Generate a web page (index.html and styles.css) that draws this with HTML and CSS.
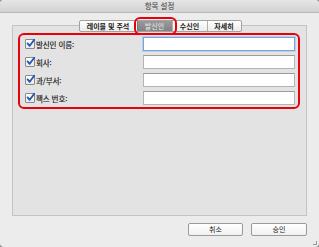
FILE: index.html
```html
<!DOCTYPE html>
<html lang="ko">
<head>
<meta charset="utf-8">
<link rel="stylesheet" href="styles.css">
</head>
<body>
<div class="window">
  <div class="titlebar">항목 설정</div>
  <div class="main">
    <div class="tabs">
      <div class="tab">레이블 및 주석</div>
      <div class="tab selected">발신인</div>
      <div class="tab">수신인</div>
      <div class="tab">자세히</div>
    </div>
    <div class="panel">
      <div class="group">
        <div class="row">
          <label class="check"><span class="box"><svg viewBox="0 0 9 9" width="9" height="9"><path d="M1.6 4.4 L3.7 6.8 L8.4 0.6" fill="none" stroke="#2457b3" stroke-width="1.8" stroke-linecap="round" stroke-linejoin="round"/></svg></span>발신인 이름:</label>
          <div class="field focus"></div>
        </div>
        <div class="row">
          <label class="check"><span class="box"><svg viewBox="0 0 9 9" width="9" height="9"><path d="M1.6 4.4 L3.7 6.8 L8.4 0.6" fill="none" stroke="#2457b3" stroke-width="1.8" stroke-linecap="round" stroke-linejoin="round"/></svg></span>회사:</label>
          <div class="field"></div>
        </div>
        <div class="row">
          <label class="check"><span class="box"><svg viewBox="0 0 9 9" width="9" height="9"><path d="M1.6 4.4 L3.7 6.8 L8.4 0.6" fill="none" stroke="#2457b3" stroke-width="1.8" stroke-linecap="round" stroke-linejoin="round"/></svg></span>과/부서:</label>
          <div class="field"></div>
        </div>
        <div class="row">
          <label class="check"><span class="box"><svg viewBox="0 0 9 9" width="9" height="9"><path d="M1.6 4.4 L3.7 6.8 L8.4 0.6" fill="none" stroke="#2457b3" stroke-width="1.8" stroke-linecap="round" stroke-linejoin="round"/></svg></span>팩스 번호:</label>
          <div class="field"></div>
        </div>
      </div>
    </div>
    <div class="buttons">
      <div class="btn">취소</div>
      <div class="btn">승인</div>
    </div>
  </div>
  <div class="grip"></div>
</div>
</body>
</html>
```
FILE: styles.css
```css
html, body {
  margin: 0;
  padding: 0;
  background: #8e8e8e;
}
.window {
  position: relative;
  width: 319px;
  height: 247px;
  box-sizing: border-box;
  background: #ececec;
  border-radius: 4px;
  overflow: hidden;
  font-family: "Noto Sans CJK KR", "Noto Sans", sans-serif;
  color: #111;
  display: flex;
  flex-direction: column;
}
.titlebar {
  height: 12px;
  line-height: 12px;
  text-align: center;
  font-size: 7.5px;
  color: #3a3a3a;
  background: linear-gradient(#e6e6e6, #d2d2d2);
  border-bottom: 1px solid #b9b9b9;
}
.main {
  padding: 7px 12px 0 12px;
  display: flex;
  flex-direction: column;
}
.tabs {
  position: relative;
  z-index: 2;
  align-self: center;
  display: flex;
  height: 12px;
  margin-left: 1px;
  border: 1px solid #a2a2a2;
  box-sizing: border-box;
  border-radius: 2px;
  background: linear-gradient(#ffffff, #ececec);
}
.tab {
  font-size: 7px;
  font-weight: bold;
  line-height: 10px;
  text-align: center;
  color: #1a1a1a;
  border-left: 1px solid #b0b0b0;
}
.tab:nth-child(1) { width: 57px; border-left: none; }
.tab:nth-child(2) { width: 34px; }
.tab:nth-child(3) { width: 34px; }
.tab:nth-child(4) { width: 33px; }
.tab.selected {
  position: relative;
  background: linear-gradient(#9a9a9a, #828282);
  color: #d4d4d4;
  border-left-color: #7a7a7a;
}
.tab.selected::after {
  content: "";
  position: absolute;
  left: -4px;
  right: -5px;
  top: -4px;
  bottom: -4px;
  border: 2px solid #e8000b;
  border-radius: 6px;
}
.panel {
  height: 191px;
  margin-top: -7px;
  box-sizing: border-box;
  border: 1px solid #c3c3c3;
  background: #e3e3e3;
  padding: 7px 6px 0 5px;
}
.group {
  height: 76px;
  box-sizing: border-box;
  border: 2px solid #e8000b;
  border-radius: 6px;
  padding: 2px 3px 0 5px;
  display: flex;
  flex-direction: column;
  gap: 4px;
}
.row {
  display: flex;
  align-items: center;
  height: 14px;
}
.check {
  width: 118px;
  display: flex;
  align-items: center;
  font-size: 7.5px;
  color: #111;
  letter-spacing: -0.1px;
  -webkit-text-stroke: 0.15px #111;
}
.box {
  width: 8px;
  height: 8px;
  margin-right: 1px;
  border: 1px solid #8a8a8a;
  background: linear-gradient(#ffffff, #e8e8e8);
  border-radius: 1px;
  position: relative;
  flex: none;
}
.box svg {
  position: absolute;
  left: 0;
  top: -1px;
}
.field {
  width: 152px;
  height: 14px;
  box-sizing: border-box;
  background: #fff;
  border: 1px solid #b4b4b4;
  border-top-color: #9c9c9c;
}
.field.focus {
  border: 1px solid #7aa4d8;
  box-shadow: 0 0 0 1px #b8d0ee;
}
.buttons {
  display: flex;
  justify-content: flex-end;
  gap: 8px;
  margin-top: 7px;
}
.btn {
  width: 55px;
  height: 13px;
  box-sizing: border-box;
  border: 1px solid #9a9a9a;
  border-radius: 2px;
  background: linear-gradient(#ffffff, #f0f0f0);
  font-size: 7px;
  line-height: 11px;
  text-align: center;
  color: #1a1a1a;
}
.btn + .btn { width: 56px; }
.grip {
  position: absolute;
  right: 2px;
  bottom: 2px;
  width: 3px;
  height: 3px;
  border-right: 1px solid #999;
  border-bottom: 1px solid #999;
}
```
